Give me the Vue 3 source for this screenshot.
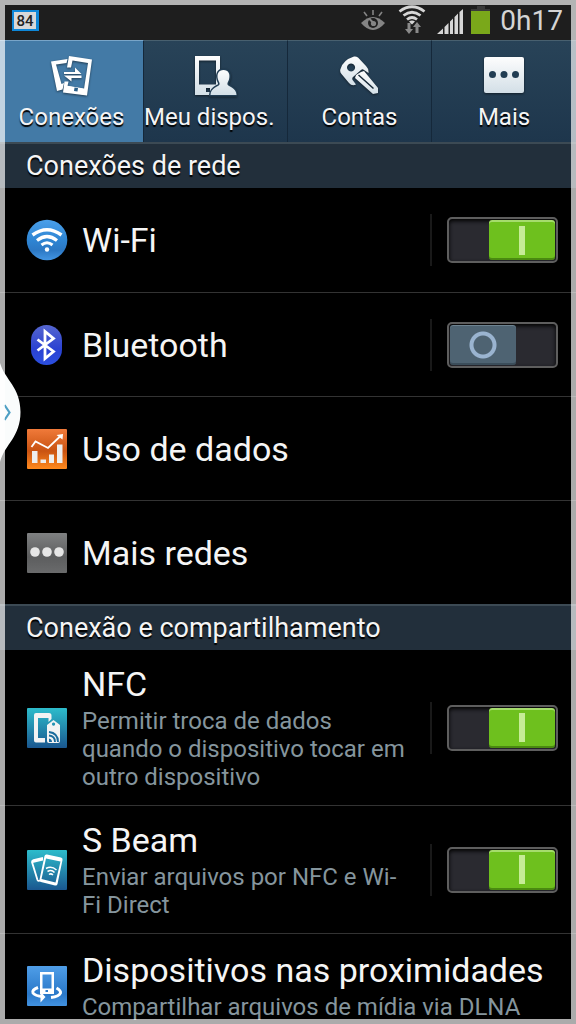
<template>
  <div class="screen">
    <header class="statusBar">
      <div class="badge">84</div>
      <div class="statusIcons">
        <svg class="eye" width="26" height="22" viewBox="0 0 26 22">
          <g stroke="#848484" stroke-width="1.6" fill="none">
            <path d="M13 0v5M4 2l3 4M22 2l-3 4" />
          </g>
          <path d="M1 13Q7 7 13 7T25 13Q19 20 13 20T1 13z" fill="#848484" />
          <circle cx="13" cy="13" r="5" fill="#1e1e1e" />
          <circle cx="13.500" cy="13.500" r="2.600" fill="#848484" />
          <path d="M9 8.500l5 5" stroke="#848484" stroke-width="2" />
        </svg>
        <svg class="signalWifi" width="28" height="30" viewBox="0 0 28 30">
          <g fill="none" stroke="#d6d6d6" stroke-width="2.800">
            <path d="M1.500 6.500Q14-3 26.500 6.500" />
            <path d="M5.500 10.500Q14 4 22.500 10.500" />
            <path d="M9 14.500Q14 10.500 19 14.500" />
          </g>
          <path d="M11 16.500q3-2 6 0l-3 3z" fill="#d6d6d6" />
          <path d="M9.500 18h3v6h2.500l-4 5-4-5h2.500zM17.500 28h3v-6H23l-4-5-4 5h2.500z" fill="#8a8a8a" />
        </svg>
        <svg class="bars" width="26" height="26" viewBox="0 0 26 26" fill="#d6d6d6">
          <path d="M0 25L6 19.500V25zM7.500 18l4-4v11h-4zM13 12.500l3-3V25h-3zM17.500 8L21 4.500V25h-3.500zM22.500 3L26 0v25h-3.500z" />
        </svg>
        <svg class="battery" width="19" height="28" viewBox="0 0 19 28">
          <path d="M6 0h8v3h5v2H0V3h6z" fill="#3a3a3a" />
          <path d="M0 5h19v23H0z" fill="#7aa81a" />
        </svg>
        <span class="clock">0h17</span>
      </div>
    </header>

    <nav class="tabs">
      <button
        v-for="(tab, i) in tabs"
        :key="i"
        class="tab"
        :class="{ active: activa === i }"
        @click="activa = i"
      >
        <svg class="tabIcon" width="42" height="42" viewBox="0 0 42 42">
          <defs>
            <linearGradient id="plata" x1="0" y1="0" x2="0" y2="1">
              <stop offset="0" stop-color="#fdfdfd" />
              <stop offset="1" stop-color="#d3dfe7" />
            </linearGradient>
          </defs>
          <g v-if="tab.icon === 'conn'">
            <path d="M0 5.500L16.500 3l-1 4L5 8.500 10.500 28l2.500-1-1.500 6.500-5.500 1.500z" fill="#fff" />
            <path
              fill-rule="evenodd"
              fill="#fff"
              d="M18 0l23 3.500-5 36L12 36.500l1.500-11h4L16.500 30l16.500 3 4-26L21.500 4.500l-1.500 7h-4z"
            />
            <path d="M33 32.500l-18-3-1 6 18 3z" fill="#fff" />
            <path d="M23.500 31.500l3.500.500-.500 3.500-3.500-.500z" fill="#2a5f88" />
            <path d="M13 16h11v-4.500l6.500 6.500H13zM30.500 19.500H13l7.500 6V22h10z" fill="#fff" />
          </g>
          <g v-else-if="tab.icon === 'device'">
            <path fill-rule="evenodd" fill="url(#plata)" d="M0 0h25v39H0zM4 4.500v24h17v-24zM11 32v4h4v-4z" />
            <path
              d="M28.500 14c5 0 7 4 5.500 9.500-.700 2.300-2 3.500-1.500 5 .500 2 9 3 9 10.500h-26c0-7.500 8.500-8.500 9-10.500.500-1.500-.800-2.700-1.500-5C21.500 18 23.500 14 28.500 14z"
              fill="none"
              stroke="#223d53"
              stroke-width="3"
            />
            <path
              d="M28.500 14c5 0 7 4 5.500 9.500-.700 2.300-2 3.500-1.500 5 .500 2 9 3 9 10.500h-26c0-7.500 8.500-8.500 9-10.500.500-1.500-.800-2.700-1.500-5C21.500 18 23.500 14 28.500 14z"
              fill="url(#plata)"
            />
          </g>
          <g v-else-if="tab.icon === 'key'">
            <path
              fill-rule="evenodd"
              fill="url(#plata)"
              d="M15 .500q2-.500 4 1l8 8.500q3 3 2.500 7L25 14q-1.500-1.500-3 0l-8 7q-1.500 1.500 0 3.500l3 4q-4 2-7-1.500L2.500 18q-2-2.500-1-5Q4 4 15 .500zM12 7.500a4 4 0 1 0 .1 0z"
            />
            <path
              fill-rule="evenodd"
              fill="url(#plata)"
              d="M22 16l3-1 14 17v5l-5 1-18-16 1-3zM20 18.500l-1 1L34 33l1-1z"
            />
          </g>
          <g v-else>
            <rect x="1" y="1" width="40" height="36" rx="2" fill="url(#plata)" />
            <circle v-for="x in [9.5, 21, 32.5]" :key="x" :cx="x" cy="18.500" r="3.500" fill="#223d53" />
          </g>
        </svg>
        <span class="tabLabel" :class="{ long: tab.label.length > 10 }">{{ tab.label }}</span>
      </button>
    </nav>

    <main>
      <section v-for="grupo in grupos" :key="grupo.titulo">
        <h2>{{ grupo.titulo }}</h2>
        <ul>
          <li v-for="item in grupo.items" :key="item.id" class="row">
            <svg class="rowIcon" width="42" height="42" viewBox="0 0 42 42">
              <g v-if="item.id === 'wifi'">
                <linearGradient id="gWifi" x1="0" y1="0" x2="0" y2="1">
                  <stop offset="0" stop-color="#4ba0ea" />
                  <stop offset=".5" stop-color="#2e85d3" />
                  <stop offset=".75" stop-color="#2c78c4" />
                  <stop offset="1" stop-color="#4396e4" />
                </linearGradient>
                <circle cx="21" cy="21" r="20.300" fill="url(#gWifi)" />
                <g fill="none" stroke="#fff">
                  <path d="M6.500 16Q21 5.500 35.500 16" stroke-width="3.400" />
                  <path d="M11 21.500Q21 13.500 31 21.500" stroke-width="3.200" />
                  <path d="M15.500 26Q21 21.500 26.500 26" stroke-width="3" />
                </g>
                <circle cx="21" cy="30.500" r="2.200" fill="#fff" />
              </g>
              <g v-else-if="item.id === 'bt'">
                <linearGradient id="gBt" x1="0" y1="0" x2="0" y2="1">
                  <stop offset="0" stop-color="#5566cf" />
                  <stop offset=".6" stop-color="#2b42d2" />
                  <stop offset="1" stop-color="#2b4fe0" />
                </linearGradient>
                <rect x="5" y="1" width="31" height="40" rx="15.500" fill="url(#gBt)" />
                <path
                  d="M11.500 15.500l16 12-8.500 7v-27l8.500 7-16 12"
                  fill="none"
                  stroke="#fff"
                  stroke-width="2.800"
                />
              </g>
              <g v-else-if="item.id === 'uso'">
                <linearGradient id="gUso" x1="0" y1="0" x2="0" y2="1">
                  <stop offset="0" stop-color="#f07a3a" />
                  <stop offset=".55" stop-color="#c95312" />
                  <stop offset="1" stop-color="#ff8a1e" />
                </linearGradient>
                <rect x="1" y="1" width="40" height="40" rx="1" fill="url(#gUso)" />
                <path d="M6 23h5.500v12H6zM14.500 31.500H20V35h-5.500zM23 26.500h5V35h-5zM31 16.500h5.500V35H31z" fill="#eee" />
                <path d="M5.500 19l4-5.500L22 20 34.500 8" fill="none" stroke="#fff" stroke-width="1.800" />
                <path d="M30.500 7L37 6l-.500 5.500z" fill="#fff" />
              </g>
              <g v-else-if="item.id === 'redes'">
                <linearGradient id="gRedes" x1="0" y1="0" x2="0" y2="1">
                  <stop offset="0" stop-color="#7f8182" />
                  <stop offset=".6" stop-color="#5c5d5e" />
                  <stop offset="1" stop-color="#6a6b6c" />
                </linearGradient>
                <rect x="1" y="1" width="40" height="40" rx="1" fill="url(#gRedes)" />
                <circle v-for="x in [9, 21, 33]" :key="x" :cx="x" cy="20" r="4.800" fill="#e6e6e6" />
              </g>
              <g v-else-if="item.id === 'nfc'">
                <linearGradient id="gNfc" x1="0" y1="0" x2="0" y2="1">
                  <stop offset="0" stop-color="#2dbccb" />
                  <stop offset="1" stop-color="#1a578f" />
                </linearGradient>
                <rect x="1" y="1" width="40" height="40" rx="1" fill="url(#gNfc)" />
                <path
                  fill="#f3f3f3"
                  d="M10 6h13q2.500 0 2.500 2.500V12l-3 3v-4H12v20h7v4.500h-9q-2 0-2-2V8q0-2 2-2z"
                />
                <path
                  fill-rule="evenodd"
                  fill="#f3f3f3"
                  d="M27.500 13l6.500 5v16q0 2-2 2h-9q-2 0-2-2V18zM27.500 15.500a1.600 1.600 0 1 0 .1 0z"
                />
                <g fill="none" stroke="#1b6b9c" stroke-width="1.900">
                  <path d="M23 25q9 1 9 10M23 28.500q6 .500 6 6.500" />
                </g>
                <path d="M23 31.500q3 .500 3 3.500h-3z" fill="#1b6b9c" />
              </g>
              <g v-else-if="item.id === 'beam'">
                <linearGradient id="gBeam" x1="0" y1="0" x2="0" y2="1">
                  <stop offset="0" stop-color="#2dbccb" />
                  <stop offset="1" stop-color="#1a578f" />
                </linearGradient>
                <rect x="1" y="1" width="40" height="40" rx="1" fill="url(#gBeam)" />
                <path
                  d="M17 9L7.500 11q-1.500.500-1.500 2l5.500 18q.500 1.500 3 .500"
                  fill="none"
                  stroke="#fff"
                  stroke-width="1.800"
                />
                <path d="M6 11.500l11-2.500v2.500L6.500 14z" fill="#fff" />
                <path
                  fill-rule="evenodd"
                  fill="#fff"
                  d="M21 5.500l14 3q2 .500 1.500 2.500l-5 24q-.500 2-2.500 1.500l-14-3.500q-2-.500-1.500-2.500l5-23.500q.500-2 2.500-1.500zM20 9.500l-4.500 20.500 14 3.500L34.500 12.500z"
                />
                <g fill="none" stroke="#fff" stroke-width="1.500">
                  <path d="M20 19.500q5.500-3 10.500 1.500M21.500 22.500q4-2.500 7 1M23 25.500q2-1.500 4 .500" />
                </g>
              </g>
              <g v-else>
                <linearGradient id="gDlna" x1="0" y1="0" x2="0" y2="1">
                  <stop offset="0" stop-color="#4f9ee8" />
                  <stop offset=".7" stop-color="#2a78c8" />
                  <stop offset="1" stop-color="#4292e0" />
                </linearGradient>
                <rect x="1" y="1" width="40" height="40" rx="1" fill="url(#gDlna)" />
                <path
                  fill-rule="evenodd"
                  fill="#fff"
                  d="M14 7h14v22H14zM16.500 9.500v14h9v-14zM19.500 25v2h2.500v-2z"
                />
                <path d="M12 22.500Q5.500 25 7 28q2 3 10 3.500" fill="none" stroke="#fff" stroke-width="3" />
                <path d="M14.500 26.500l5 5.500-5 5.500z" fill="#fff" />
                <path d="M25 32.500q8-1 9.500-4.500.500-2.500-4-5" fill="none" stroke="#fff" stroke-width="3" />
              </g>
            </svg>

            <div class="texts" :class="{ narrow: 'on' in item }">
              <label v-if="'on' in item" class="title" :for="item.id">{{ item.titulo }}</label>
              <span v-else class="title">{{ item.titulo }}</span>
              <p v-if="item.detalle">{{ item.detalle }}</p>
            </div>

            <div v-if="'on' in item" class="switchBox">
              <input type="checkbox" class="switch" :id="item.id" v-model="item.on" />
            </div>
          </li>
        </ul>
      </section>
    </main>

    <button class="handle" aria-label="Abrir painel">
      <svg width="21" height="100" viewBox="0 0 21 100">
        <path d="M0 0C5 17 20.500 24 20.500 49S5 81 0 99z" fill="#fafcfc" />
        <path d="M4.500 42l5 7.500-5 7.500" fill="none" stroke="#4f9fc4" stroke-width="2.200" />
      </svg>
    </button>
    <div class="frame"></div>
  </div>
</template>

<script setup>
import { ref } from "vue";

const activa = ref(0);

const tabs = [
  { icon: "conn", label: "Conexões" },
  { icon: "device", label: "Meu dispos." },
  { icon: "key", label: "Contas" },
  { icon: "more", label: "Mais" },
];

const grupos = ref([
  {
    titulo: "Conexões de rede",
    items: [
      { id: "wifi", titulo: "Wi-Fi", on: true },
      { id: "bt", titulo: "Bluetooth", on: false },
      { id: "uso", titulo: "Uso de dados" },
      { id: "redes", titulo: "Mais redes" },
    ],
  },
  {
    titulo: "Conexão e compartilhamento",
    items: [
      {
        id: "nfc",
        titulo: "NFC",
        detalle: "Permitir troca de dados quando o dispositivo tocar em outro dispositivo",
        on: true,
      },
      {
        id: "beam",
        titulo: "S Beam",
        detalle: "Enviar arquivos por NFC e Wi-Fi Direct",
        on: true,
      },
      {
        id: "dlna",
        titulo: "Dispositivos nas proximidades",
        detalle: "Compartilhar arquivos de mídia via DLNA",
      },
    ],
  },
]);
</script>

<style>
body {
  background: #000;
}
</style>

<style scoped>
* {
  box-sizing: border-box;
  margin: 0;
  padding: 0;
}

.screen {
  position: relative;
  height: 100vh;
  overflow: hidden;
  background: #000;
  color: #f5f5f5;
  font-family: Roboto, "Liberation Sans", sans-serif;
}

.statusBar {
  display: flex;
  justify-content: space-between;
  align-items: flex-start;
  height: 40px;
  padding: 5px 13px 0 12px;
  background: #1e1e1e;
}

.badge {
  width: 27px;
  height: 21px;
  margin-top: 5px;
  border: 2px solid #0e87d8;
  border-right-width: 3px;
  background: #d8d8d8;
  color: #222;
  font-size: 15px;
  font-weight: 500;
  line-height: 18px;
  text-align: center;
}

.statusIcons {
  display: flex;
  align-items: flex-start;
}

.eye {
  margin: 5px 12px 0 0;
}

.signalWifi {
  margin-right: 11px;
}

.bars {
  margin: 4px 8px 0 0;
}

.battery {
  margin: 1px 10px 0 0;
}

.clock {
  color: #d4d4d4;
  font-size: 28px;
  line-height: 31px;
}

.tabs {
  display: grid;
  grid-template-columns: repeat(4, 1fr);
  height: 102px;
}

.tab {
  display: flex;
  flex-direction: column;
  align-items: center;
  gap: 3px;
  padding-top: 15px;
  border: 0;
  border-top: 1px solid #48606f;
  border-right: 1px solid #15283a;
  background: linear-gradient(#284358, #1e364c);
  color: #f5f5f5;
  font-family: inherit;
  font-size: 24px;
  line-height: 32px;
  white-space: nowrap;
  text-shadow: 0 2px 1px #000;
}

.tab:last-child {
  border-right: 0;
}

.tab.active {
  border-top-color: #79a5c8;
  background: #437aa6;
}

.tabIcon {
  flex: none;
  filter: drop-shadow(0 1px 1px rgba(0, 0, 0, 0.5));
}

.tabLabel.long {
  align-self: flex-start;
}

h2 {
  height: 46px;
  padding-left: 26px;
  border-top: 2px solid #3c4a54;
  background: #222f3b;
  font-size: 27px;
  font-weight: 400;
  line-height: 45px;
  text-shadow: 0 2px 1px #000;
}

ul {
  list-style: none;
}

.row {
  display: flex;
  align-items: center;
  min-height: 104px;
  padding: 14px 18px 14px 26px;
}

.row + .row {
  border-top: 1px solid #333;
}

.rowIcon {
  flex: none;
  margin-right: 14px;
}

.texts {
  flex: 1;
}

.narrow {
  padding-right: 18px;
}

.title {
  display: block;
  font-size: 34px;
  line-height: 40px;
}

p {
  margin-top: 3px;
  color: #85959d;
  font-size: 24px;
  line-height: 28px;
}

.switchBox {
  display: flex;
  align-items: center;
  height: 52px;
  padding-left: 15px;
  border-left: 2px solid #191919;
}

.switch {
  appearance: none;
  display: flex;
  width: 111px;
  height: 46px;
  padding: 1px;
  border: 2px solid #5e5e5e;
  border-radius: 5px;
  background: #2a2a30;
  box-shadow: inset 0 2px 4px #000;
}

.switch::before {
  content: "";
  width: 66px;
  height: 40px;
  border-radius: 3px;
  background:
    radial-gradient(circle, transparent 9px, #9ab4d0 10px, #9ab4d0 13px, transparent 14px),
    #4e6372;
  box-shadow: inset 0 1px #6d8391, inset 0 -2px #3b4d5a;
}

.switch:checked {
  justify-content: flex-end;
}

.switch:checked::before {
  background: linear-gradient(#c6ec97, #c6ec97) center / 6px 29px no-repeat, #6ec01e;
  box-shadow: inset 0 2px #a5dc6c, inset 0 -2px #4a8a10;
}

.handle {
  position: absolute;
  top: 363px;
  left: 0;
  border: 0;
  background: none;
}

.handle svg {
  display: block;
}

.frame {
  position: absolute;
  inset: 0;
  border: 5px solid rgba(255, 255, 255, 0.67);
  pointer-events: none;
}
</style>
